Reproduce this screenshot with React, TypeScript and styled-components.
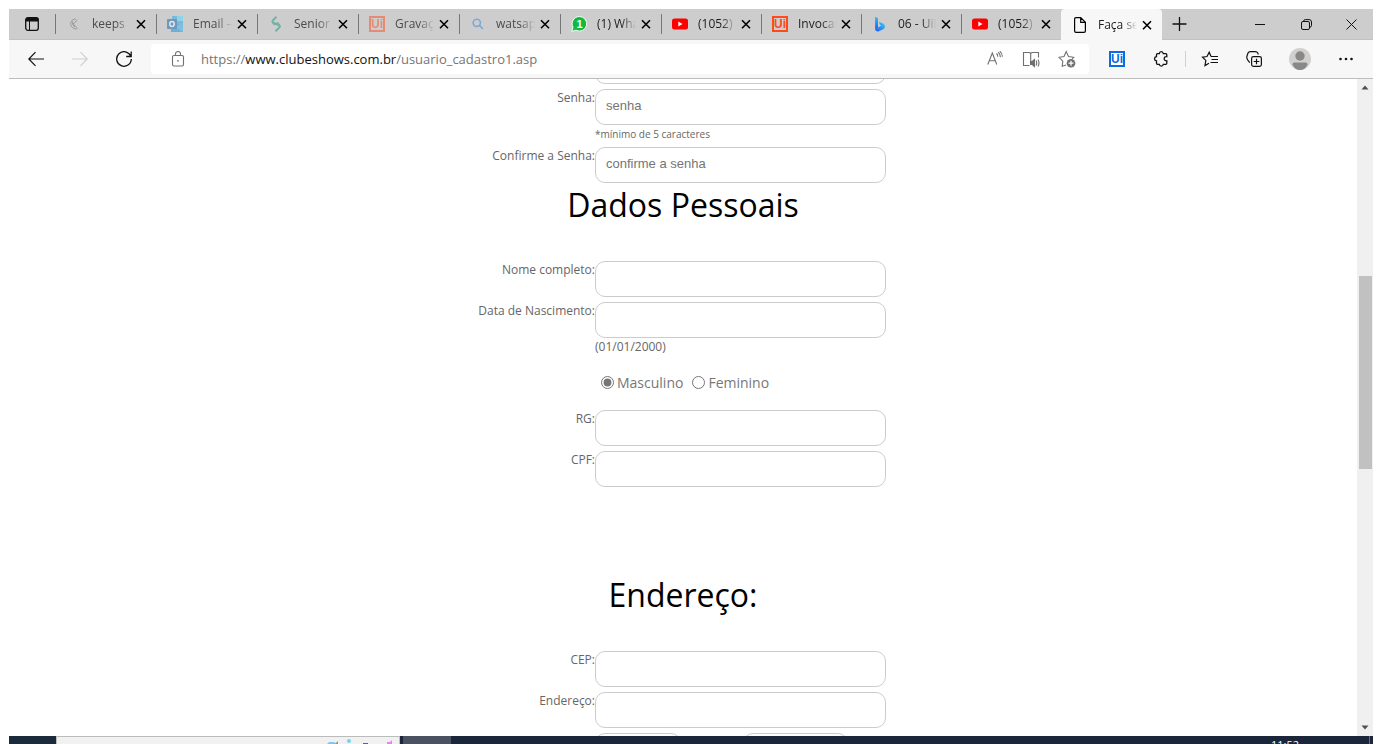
import React from "react";
import styled, { createGlobalStyle, css } from "styled-components";

const GlobalStyle = createGlobalStyle`
  *, *::before, *::after { box-sizing: border-box; }
  html, body { margin: 0; background: #fff; }
  body { font-family: "Open Sans", "Noto Sans", sans-serif; overflow: hidden; }
  button { border: 0; padding: 0; background: none; color: inherit; font: inherit; cursor: pointer; }
`;

const Screen = styled.div`
  display: flex;
  flex-direction: column;
  height: 100vh;
  padding: 9px 9px 0;
  overflow: hidden;
`;

/* ---------- tab strip ---------- */

const TabStrip = styled.header`
  display: flex;
  flex: none;
  height: 31px;
  background: #cdcdcd;
  border-bottom: 1px solid #c2c2c2;
`;

const IconButton = styled.button<{ $width: number; $muted?: boolean }>`
  display: flex;
  flex: none;
  align-items: center;
  justify-content: center;
  width: ${(p) => p.$width}px;
  height: 30px;
  color: ${(p) => (p.$muted ? "#707070" : "#111")};
  &:disabled { color: #cfcfcf; }
`;

const TabList = styled.nav`
  display: flex;
  flex: 0 1 1107px;
  min-width: 0;
`;

const Tab = styled.div<{ $basis: number; $active?: boolean }>`
  display: flex;
  flex: 0 1 ${(p) => p.$basis}px;
  align-items: center;
  min-width: 0;
  height: 30px;
  padding: 0 10px;
  position: relative;
  ${(p) =>
    p.$active
      ? css`
          height: 31px;
          background: #f7f7f7;
          border-radius: 4px 4px 0 0;
          padding-left: 11px;
        `
      : css`
          &::before {
            content: "";
            width: 1px;
            height: 20px;
            background: #777;
            margin-left: -10px;
            margin-right: 10px;
          }
        `}
`;

const TabIcon = styled.span<{ $faded?: boolean }>`
  display: flex;
  flex: none;
  align-items: center;
  justify-content: center;
  width: 16px;
  height: 16px;
  margin-right: 10px;
  opacity: ${(p) => (p.$faded ? 0.5 : 1)};
`;

const TabTitle = styled.span<{ $faded?: boolean }>`
  flex: 1 1 0;
  min-width: 0;
  overflow: hidden;
  white-space: nowrap;
  font-size: 12px;
  line-height: 18px;
  color: ${(p) => (p.$faded ? "#4c4c4c" : "#1c1c1c")};
  mask-image: linear-gradient(to right, #000 60%, transparent 98%);
`;

const TabClose = styled.button`
  display: flex;
  flex: none;
  align-items: center;
  justify-content: flex-end;
  width: 14px;
  height: 16px;
  color: #000;
`;

const Spacer = styled.div`
  flex: 1;
`;

const UiBadge = styled.span<{ $color: string; $fill: string }>`
  display: flex;
  align-items: center;
  justify-content: center;
  width: 16px;
  height: 16px;
  border: 2px solid ${(p) => p.$color};
  color: ${(p) => p.$color};
  background: ${(p) => p.$fill};
  font: bold 12px/12px "Liberation Sans", sans-serif;
`;

/* ---------- toolbar ---------- */

const Toolbar = styled.div`
  display: flex;
  flex: none;
  align-items: center;
  height: 39px;
  padding: 0 5px;
  background: #f7f7f7;
  border-bottom: 1px solid #bdbdbd;
`;

const AddressBar = styled.div`
  display: flex;
  flex: 1;
  align-items: center;
  min-width: 0;
  height: 30px;
  margin: 0 6px 0 5px;
  padding: 0 4px;
  background: #fff;
  border-radius: 4px;
`;

const Url = styled.div`
  flex: 1;
  min-width: 0;
  overflow: hidden;
  white-space: nowrap;
  margin-left: 1px;
  font-size: 13px;
  line-height: 20px;
  color: #757575;
`;

const Host = styled.span`
  color: #111;
`;

const ToolbarRule = styled.span`
  width: 1px;
  height: 16px;
  margin: 0 2px;
  background: #d0d0d0;
`;

/* ---------- page ---------- */

const Viewport = styled.div`
  display: flex;
  flex: 1;
  min-height: 0;
  overflow: hidden;
`;

const Page = styled.main`
  flex: 1;
  min-width: 0;
  overflow: hidden;
`;

const Form = styled.form`
  width: 420px;
  max-width: 100%;
  margin: -31px auto 0;
`;

const Section = styled.section<{ $spaced?: boolean }>`
  padding-top: ${(p) => (p.$spaced ? 86 : 0)}px;
`;

const Heading = styled.h1`
  margin: 0 0 39px;
  font-size: 32px;
  font-weight: 400;
  line-height: 34px;
  text-align: center;
  color: #000;
`;

const Row = styled.div`
  display: grid;
  grid-template-columns: 122px 291px;
  margin-bottom: 5px;
`;

const Label = styled.label`
  font-size: 12px;
  line-height: 18px;
  text-align: right;
  white-space: nowrap;
  color: #666;
`;

const TextInput = styled.input<{ $width?: number }>`
  display: block;
  width: ${(p) => (p.$width ? `${p.$width}px` : "100%")};
  height: 36px;
  padding: 0 10px 4px;
  border: 1px solid #ccc;
  border-radius: 10px;
  outline: 0;
  background: #fff;
  color: #555;
  font: 13px "Liberation Sans", Arial, sans-serif;
  &::placeholder { color: #757575; }
`;

const Hint = styled.div<{ $small?: boolean }>`
  padding-top: ${(p) => (p.$small ? 2 : 0)}px;
  font-size: ${(p) => (p.$small ? 10 : 12)}px;
  line-height: ${(p) => (p.$small ? 15 : 17)}px;
  color: #666;
`;

const RadioRow = styled.fieldset`
  display: flex;
  align-items: center;
  height: 45px;
  margin: 0 0 5px;
  padding: 0 0 0 128px;
  border: 0;
`;

const RadioLabel = styled.label`
  display: flex;
  align-items: center;
  margin-right: 9px;
  font-size: 14px;
  line-height: 20px;
  color: #777;
`;

const Radio = styled.input`
  width: 13px;
  height: 13px;
  margin: 0 3px 0 0;
  accent-color: #767676;
`;

const PairRow = styled.div`
  display: flex;
  gap: 62px;
  padding-left: 122px;
`;

/* ---------- scrollbar ---------- */

const ScrollTrack = styled.div`
  display: flex;
  flex: none;
  flex-direction: column;
  width: 16px;
  background: #f0f0f0;
`;

const ScrollArrow = styled.button`
  display: flex;
  flex: none;
  align-items: center;
  justify-content: center;
  height: 17px;
  color: #505050;
`;

const ScrollSpace = styled.div<{ $grow: number }>`
  flex: ${(p) => p.$grow} 1 0;
`;

const ScrollThumb = styled.div`
  flex: 193 1 0;
  margin: 0 1px 0 2px;
  background: #c1c1c1;
`;

/* ---------- taskbar ---------- */

const Taskbar = styled.footer`
  display: flex;
  flex: none;
  height: 8px;
  overflow: hidden;
  background: #1b263b;
`;

const StartArea = styled.div`
  width: 47px;
  background: #1c2b3c;
`;

const SearchBox = styled.div`
  display: flex;
  flex: none;
  width: 344px;
  height: 8px;
  padding-left: 270px;
  border: solid #bbb;
  border-width: 1px 1px 0;
  background: #f1f1f1;
  overflow: hidden;
`;

const TaskButton = styled.div`
  width: 48px;
  margin-left: 3px;
  background: #4a5262;
`;

const Clock = styled.time`
  margin-right: 70px;
  padding-top: 3px;
  font-size: 11px;
  line-height: 12px;
  color: #fff;
`;

const DesktopEdge = styled.div`
  width: 4px;
  border-left: 1px solid #68707e;
`;

/* ---------- icons ---------- */

type IconProps = { size?: number; children: React.ReactNode; box?: string; width?: number };

const Icon = ({ size = 16, box = "0 0 16 16", width = 1, children }: IconProps) => (
  <svg width={size} height={size} viewBox={box} fill="none" stroke="currentColor" strokeWidth={width} aria-hidden="true">
    {children}
  </svg>
);

const PanelIcon = () => (
  <Icon>
    <rect x="1.7" y="1.7" width="12.6" height="12.6" rx="2.2" strokeWidth="1.3" />
    <path d="M2 4V3.5Q2 2 3.5 2h9Q14 2 14 3.5V5H2z" fill="currentColor" />
    <path d="M5.5 5v9" />
  </Icon>
);

const CrossIcon = () => (
  <Icon size={10} box="0 0 10 10" width={1.6}>
    <path d="M1 1.200l8 8M9 1.200l-8 8" />
  </Icon>
);

const KeepsIcon = () => (
  <Icon width={1}>
    <path d="M11.500 4L7 8l4.300 4M10 3.300Q8 2.500 6.200 4.300T4.700 8.500Q5 11 8 12.500t3.300-.3M6.500 5.500Q5.500 8.500 9 11" stroke="#666" />
  </Icon>
);

const OutlookIcon = () => (
  <Icon>
    <g stroke="none">
      <path d="M5 0h11v9H5z" fill="#28a8ea" />
      <path d="M10 0h6v5h-6z" fill="#50d9ff" />
      <path d="M4 7l12 2v7H4z" fill="#1490df" />
      <path d="M16 7v9L7 11z" fill="#2ab7f3" />
      <rect y="3" width="10" height="10" rx="1" fill="#0f64b5" />
    </g>
    <ellipse cx="5" cy="8" rx="2.2" ry="2.4" stroke="#fff" strokeWidth="1.5" />
  </Icon>
);

const SeniorIcon = () => (
  <Icon width={2}>
    <path d="M8.500.8L5 4.300q-1.200 1.200 0 2.400L7 8.800M9 6.500l2.300 2.600q1.200 1.200 0 2.400L7.500 15.200M5 6.500l6.500 3" stroke="#169a80" />
  </Icon>
);

const SearchIcon = () => (
  <Icon width={1.6}>
    <circle cx="6.800" cy="6.800" r="3.600" stroke="#2b86d9" />
    <path d="M9.400 9.400l3.600 3.600" stroke="#2b86d9" />
  </Icon>
);

const WhatsIcon = () => (
  <Icon>
    <path d="M8.500.5a7.300 7.300 0 1 1-3.600 13.700L.8 15.500 2 11.300A7.300 7.300 0 0 1 8.500.5z" fill="#12b83f" stroke="#f4fff6" />
    <text x="8.500" y="12" fill="#fff" stroke="none" fontSize="11" fontWeight="700" textAnchor="middle" fontFamily="Liberation Sans">1</text>
  </Icon>
);

const YoutubeIcon = () => (
  <Icon>
    <rect y="2.500" width="16" height="11" rx="2.500" fill="#f00" stroke="none" />
    <path d="M6.300 5.500v5l4.200-2.500z" fill="#fff" stroke="none" />
  </Icon>
);

const BingIcon = () => (
  <Icon>
    <defs>
      <linearGradient id="bing" x1="0" y1="0" x2="0" y2="1">
        <stop offset="0" stopColor="#37bdff" />
        <stop offset="1" stopColor="#2055f0" />
      </linearGradient>
      <linearGradient id="bingBowl" x1="1" y1="0" x2="0" y2="1">
        <stop offset="0" stopColor="#3ad4f0" />
        <stop offset="1" stopColor="#2058f5" />
      </linearGradient>
    </defs>
    <g stroke="none">
      <path d="M3 .8l3 1.200v9.500L3.200 13.800z" fill="url(#bing)" />
      <path d="M3.200 13.200L6 11.500l3.300-2L8 8.700 6.900 5.700 11 7.500q2 1 2 3t-1.800 2.800L6.300 15.500q-2.800.3-3.100-2.300z" fill="url(#bingBowl)" />
    </g>
  </Icon>
);

const FileIcon = () => (
  <Icon width={1.2}>
    <path d="M2.600 2q0-1.400 1.400-1.400h4.700L13.400 5.300V14q0 1.400-1.400 1.400H4q-1.400 0-1.400-1.400zM8.700.6v4.700h4.700" />
  </Icon>
);

const PlusIcon = () => (
  <Icon width={1.3}>
    <path d="M7.500 1v14M.5 8h14" />
  </Icon>
);

const MinimizeIcon = () => (
  <Icon size={10} box="0 0 10 10">
    <path d="M0 5.500h10" />
  </Icon>
);

const RestoreIcon = () => (
  <Icon size={11} box="0 0 11 11">
    <rect x=".5" y="2.500" width="8" height="8" rx="1.500" />
    <path d="M2.500 2.500Q2.500.6 4.500.6h3.700Q10.500.6 10.500 3v3.500q0 1.500-1.700 1.800" />
  </Icon>
);

const CloseIcon = () => (
  <Icon size={11} box="0 0 11 11">
    <path d="M.5.5l10 10M10.500.5l-10 10" />
  </Icon>
);

const BackIcon = () => (
  <Icon width={1.200}>
    <path d="M16 8H.8M7.500 1.200L.8 8l6.700 6.800" />
  </Icon>
);

const ForwardIcon = () => (
  <Icon width={1.200}>
    <path d="M0 8h15.200M8.500 1.200L15.200 8l-6.700 6.800" />
  </Icon>
);

const ReloadIcon = () => (
  <Icon width={1.300}>
    <path d="M14.800 5.300A7.300 7.300 0 1 0 15.300 8M15.200.5v5h-5" />
  </Icon>
);

const LockIcon = () => (
  <Icon width={1.100}>
    <rect x="2.500" y="4.500" width="11" height="10.500" rx="1.500" />
    <path d="M5.500 4.500V3a2.500 2.500 0 0 1 5 0v1.500" />
    <circle cx="8" cy="9.800" r=".9" fill="currentColor" stroke="none" />
  </Icon>
);

const ReadAloudIcon = () => (
  <Icon width={1.100}>
    <path d="M.8 13.500L5.300 2l4.500 11.500M2.400 9.700h5.900M9.500 2.500q1.300 1.200 1.300 3.200M11.200 1.200q2.200 1.800 2.200 5M12.800.2q2.700 2.300 2.500 5.500" />
  </Icon>
);

const ReaderIcon = () => (
  <Icon size={18} box="0 0 18 18" width={1.100}>
    <path d="M7.500 15.500H1.500V2.500h6l1.200 1 1.200-1h6.600v5M8.700 3.500V12" />
    <path d="M8.500 11.500h1.700l2.300-2v7l-2.300-2H8.500z" fill="currentColor" />
    <path d="M14 10.500q1.500 2.500 0 5M16 9.500q2 3.500 0 7" />
  </Icon>
);

const StarAddIcon = () => (
  <Icon size={18} box="0 0 18 18" width={1.100}>
    <path d="M8 15l-3.800 1.300.6-5.200L1 7.300l5-.8L8.200 1.500l2.300 5 5.200.8-1.500 1.500" />
    <circle cx="13" cy="13.200" r="4.300" fill="currentColor" stroke="none" />
    <path d="M13 10.700v5M10.500 13.200h5" stroke="#fff" strokeWidth="1.200" />
  </Icon>
);

const PuzzleIcon = () => (
  <Icon width={1.300}>
    <path d="M4.500 2.700h1.800q.2-2 2-2t2 2h2.500q1 0 1 1v2q-2.600-.2-2.600 2t2.600 2.100v2.500q0 1-1 1h-2.500q-.2 1.900-2 1.900t-2-1.900H4.500q-1 0-1-1v-2.500Q1.500 9.600 1.500 7.700t2-2.100V3.700q0-1 1-1z" />
  </Icon>
);

const FavoritesIcon = () => (
  <Icon size={18} box="0 0 18 18" width={1.200}>
    <path d="M10 6.500L8.200 2.200 6 6.500l-4.500.7 3.300 3.200-.8 5.100 4-2.300M10 6.500h7M10.500 9.500H17M9.500 12.500H17" />
  </Icon>
);

const CollectionsIcon = () => (
  <Icon width={1.200}>
    <rect x="5.600" y="5.600" width="9.800" height="9.800" rx="1.800" />
    <path d="M10.500 7.700v5.600M7.700 10.500h5.600M3.800 11.700L1.800 9.200Q.3 7 1 5L2 2Q2.500.6 4.500.6h4.800q1.700 0 2.300 1.200l.8 1.700" />
  </Icon>
);

const AvatarIcon = () => (
  <Icon size={22} box="0 0 22 22">
    <g stroke="none">
      <circle cx="11" cy="11" r="11" fill="#d2d0ce" />
      <circle cx="11" cy="8" r="4.700" fill="#8a8886" />
      <path d="M3.500 16.500q0-2 2-2h11q2 0 2 2Q16 22 11 22t-7.500-5.500z" fill="#8a8886" />
    </g>
  </Icon>
);

const DotsIcon = () => (
  <Icon>
    <g fill="currentColor" stroke="none">
      <circle cx="2.500" cy="8" r="1.300" />
      <circle cx="8" cy="8" r="1.300" />
      <circle cx="13.500" cy="8" r="1.300" />
    </g>
  </Icon>
);

const Triangle = ({ down }: { down?: boolean }) => (
  <svg width="8" height="5" viewBox="0 0 8 5" aria-hidden="true">
    <path d={down ? "M.5.5h7L4 4.500z" : "M.5 4.500h7L4 .5z"} fill="currentColor" />
  </svg>
);

const SearchArt = () => (
  <svg width="72" height="7" viewBox="0 0 72 7" aria-hidden="true">
    <path d="M0 7l2-2h5l3 2z" fill="#7cc8ee" />
    <path d="M8 7l3-3v3z" fill="#9a8d80" />
    <circle cx="22" cy="4" r="2" fill="#6cd8e8" />
    <path d="M36 6.500h5" stroke="#5a5aa5" />
    <path d="M60 7V5h3l2-2v4z" fill="#ec80f0" />
  </svg>
);

/* ---------- content ---------- */

const orangeUi = <UiBadge $color="#ff4a1c" $fill="transparent">Ui</UiBadge>;

const tabs: { title: string; icon: React.ReactNode; faded?: boolean; basis: number }[] = [
  { title: "keeps", icon: <KeepsIcon />, faded: true, basis: 101 },
  { title: "Email – Outlook", icon: <OutlookIcon />, faded: true, basis: 101 },
  { title: "Senior", icon: <SeniorIcon />, faded: true, basis: 101 },
  { title: "Gravação", icon: orangeUi, faded: true, basis: 101 },
  { title: "watsapp", icon: <SearchIcon />, faded: true, basis: 101 },
  { title: "(1) WhatsApp", icon: <WhatsIcon />, basis: 101 },
  { title: "(1052) YouTube", icon: <YoutubeIcon />, basis: 100 },
  { title: "Invocar", icon: orangeUi, basis: 100 },
  { title: "06 - UiPath", icon: <BingIcon />, basis: 100 },
  { title: "(1052) YouTube", icon: <YoutubeIcon />, basis: 100 },
];

type FieldProps = {
  id: string;
  label: string;
  type?: string;
  placeholder?: string;
  hint?: string;
  smallHint?: boolean;
};

const Field = ({ id, label, type = "text", placeholder, hint, smallHint }: FieldProps) => (
  <Row>
    <Label htmlFor={id}>{label}</Label>
    <div>
      <TextInput id={id} type={type} placeholder={placeholder} />
      {hint && <Hint $small={smallHint}>{hint}</Hint>}
    </div>
  </Row>
);

export default function App() {
  return (
    <Screen>
      <GlobalStyle />
      <TabStrip>
        <IconButton $width={46} aria-label="Menu de guias"><PanelIcon /></IconButton>
        <TabList>
          {tabs.map((tab, i) => (
            <Tab key={i} $basis={tab.basis}>
              <TabIcon $faded={tab.faded}>{tab.icon}</TabIcon>
              <TabTitle $faded={tab.faded}>{tab.title}</TabTitle>
              <TabClose aria-label="Fechar guia"><CrossIcon /></TabClose>
            </Tab>
          ))}
          <Tab $basis={101} $active>
            <TabIcon><FileIcon /></TabIcon>
            <TabTitle>Faça seu cadastro</TabTitle>
            <TabClose aria-label="Fechar guia"><CrossIcon /></TabClose>
          </Tab>
        </TabList>
        <IconButton $width={36} aria-label="Nova guia"><PlusIcon /></IconButton>
        <Spacer />
        <IconButton $width={46} aria-label="Minimizar"><MinimizeIcon /></IconButton>
        <IconButton $width={46} aria-label="Restaurar"><RestoreIcon /></IconButton>
        <IconButton $width={44} aria-label="Fechar"><CloseIcon /></IconButton>
      </TabStrip>

      <Toolbar>
        <IconButton $width={44} aria-label="Voltar"><BackIcon /></IconButton>
        <IconButton $width={44} aria-label="Avançar" disabled><ForwardIcon /></IconButton>
        <IconButton $width={44} aria-label="Atualizar"><ReloadIcon /></IconButton>
        <AddressBar>
          <IconButton $width={45} $muted aria-label="Informações do site"><LockIcon /></IconButton>
          <Url role="textbox" aria-label="Endereço do site">
            https://<Host>www.clubeshows.com.br</Host>/usuario_cadastro1.asp
          </Url>
          <IconButton $width={36} $muted aria-label="Ler em voz alta"><ReadAloudIcon /></IconButton>
          <IconButton $width={36} $muted aria-label="Leitura avançada"><ReaderIcon /></IconButton>
          <IconButton $width={36} $muted aria-label="Adicionar aos favoritos"><StarAddIcon /></IconButton>
        </AddressBar>
        <IconButton $width={44} aria-label="UiPath">
          <UiBadge $color="#0a6ce0" $fill="#fff">Ui</UiBadge>
        </IconButton>
        <IconButton $width={44} aria-label="Extensões"><PuzzleIcon /></IconButton>
        <ToolbarRule />
        <IconButton $width={44} aria-label="Favoritos"><FavoritesIcon /></IconButton>
        <IconButton $width={44} aria-label="Coleções"><CollectionsIcon /></IconButton>
        <IconButton $width={48} aria-label="Perfil"><AvatarIcon /></IconButton>
        <IconButton $width={44} aria-label="Configurações"><DotsIcon /></IconButton>
      </Toolbar>

      <Viewport>
        <Page>
          <Form>
            <Section>
              <Field id="email" label="Email:" type="email" />
              <Field id="senha" label="Senha:" type="password" placeholder="senha" hint="*mínimo de 5 caracteres" smallHint />
              <Field id="confirme" label="Confirme a Senha:" type="password" placeholder="confirme a senha" />
            </Section>
            <Section>
              <Heading>Dados Pessoais</Heading>
              <Field id="nome" label="Nome completo:" />
              <Field id="nascimento" label="Data de Nascimento:" hint="(01/01/2000)" />
              <RadioRow aria-label="Sexo">
                <RadioLabel><Radio type="radio" name="sexo" defaultChecked />Masculino</RadioLabel>
                <RadioLabel><Radio type="radio" name="sexo" />Feminino</RadioLabel>
              </RadioRow>
              <Field id="rg" label="RG:" />
              <Field id="cpf" label="CPF:" />
            </Section>
            <Section $spaced>
              <Heading>Endereço:</Heading>
              <Field id="cep" label="CEP:" />
              <Field id="endereco" label="Endereço:" />
              <PairRow>
                <TextInput $width={86} aria-label="Número" />
                <TextInput $width={105} aria-label="Complemento" />
              </PairRow>
            </Section>
          </Form>
        </Page>
        <ScrollTrack>
          <ScrollArrow aria-label="Rolar para cima"><Triangle /></ScrollArrow>
          <ScrollSpace $grow={180} />
          <ScrollThumb />
          <ScrollSpace $grow={250} />
          <ScrollArrow aria-label="Rolar para baixo"><Triangle down /></ScrollArrow>
        </ScrollTrack>
      </Viewport>

      <Taskbar>
        <StartArea />
        <SearchBox><SearchArt /></SearchBox>
        <TaskButton />
        <Spacer />
        <Clock>11:52</Clock>
        <DesktopEdge />
      </Taskbar>
    </Screen>
  );
}
